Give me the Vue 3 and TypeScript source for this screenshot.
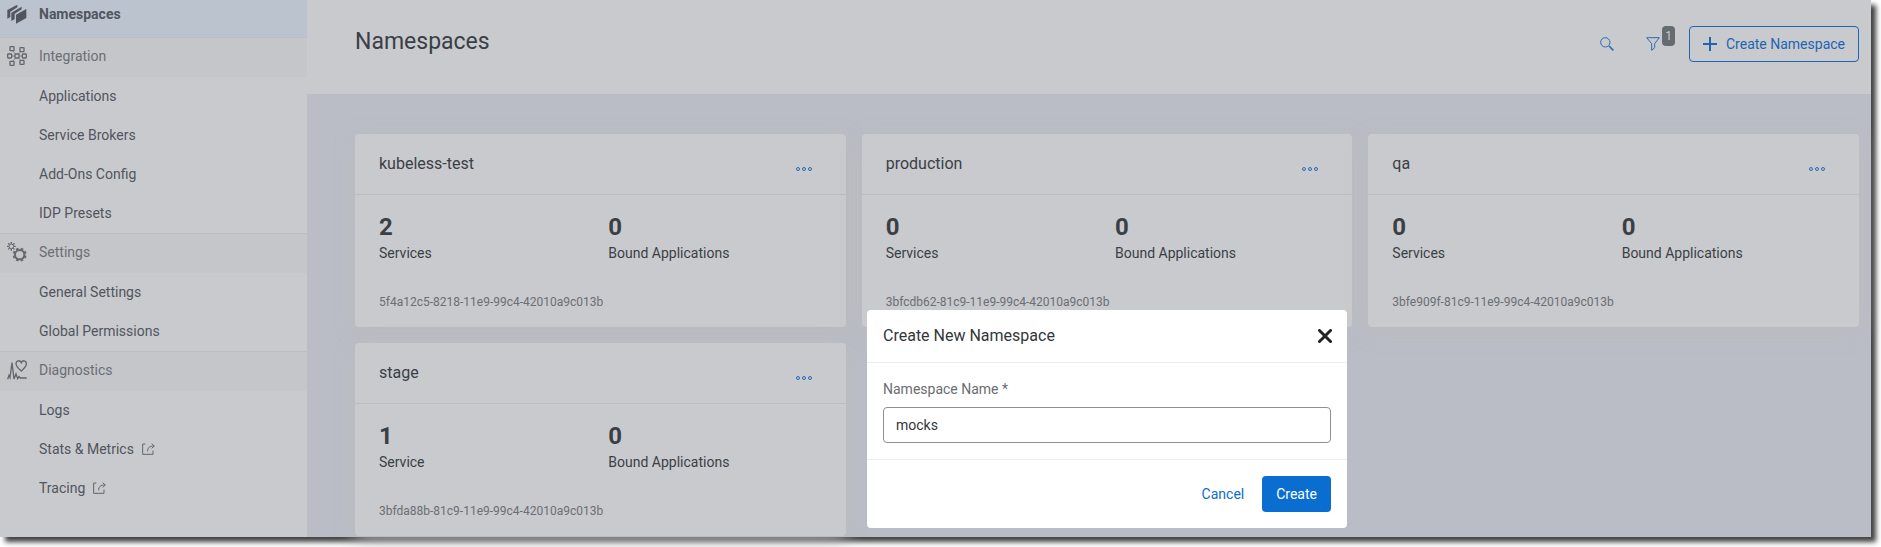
<script setup lang="ts">
import { ref } from 'vue'

interface NavItem {
  label: string
  external?: boolean
}

interface NavGroup {
  title: string
  icon: 'integration' | 'settings' | 'diagnostics'
  items: NavItem[]
}

interface Namespace {
  name: string
  services: number
  applications: number
  uid: string
}

const groups: NavGroup[] = [
  {
    title: 'Integration',
    icon: 'integration',
    items: [
      { label: 'Applications' },
      { label: 'Service Brokers' },
      { label: 'Add-Ons Config' },
      { label: 'IDP Presets' },
    ],
  },
  {
    title: 'Settings',
    icon: 'settings',
    items: [{ label: 'General Settings' }, { label: 'Global Permissions' }],
  },
  {
    title: 'Diagnostics',
    icon: 'diagnostics',
    items: [
      { label: 'Logs' },
      { label: 'Stats & Metrics', external: true },
      { label: 'Tracing', external: true },
    ],
  },
]

const namespaces: Namespace[] = [
  { name: 'kubeless-test', services: 2, applications: 0, uid: '5f4a12c5-8218-11e9-99c4-42010a9c013b' },
  { name: 'production', services: 0, applications: 0, uid: '3bfcdb62-81c9-11e9-99c4-42010a9c013b' },
  { name: 'qa', services: 0, applications: 0, uid: '3bfe909f-81c9-11e9-99c4-42010a9c013b' },
  { name: 'stage', services: 1, applications: 0, uid: '3bfda88b-81c9-11e9-99c4-42010a9c013b' },
]

const newName = ref('mocks')
</script>

<template>
  <div class="shell">
    <nav class="sidebar">
      <a class="current" href="#">
        <svg class="nav-icon" viewBox="0 0 60 60" aria-hidden="true">
          <path d="M1 18 31 2V10L10 23V39L1 44z" />
          <path d="M13 26 44 8V16L23 29V45L13 51z" />
          <path d="M27 32 58 15V42L27 59z" />
        </svg>
        <span>Namespaces</span>
      </a>
      <section v-for="group in groups" :key="group.title" class="group">
        <h2 class="group-title">
          <svg v-if="group.icon === 'integration'" class="nav-icon outline" viewBox="0 0 60 60" aria-hidden="true">
            <rect x="9" y="2" width="12" height="12" rx="2" />
            <rect x="39" y="5" width="12" height="12" rx="2" />
            <rect x="2" y="24" width="12" height="12" rx="2" />
            <rect x="24" y="24" width="12" height="12" rx="2" />
            <rect x="46" y="24" width="12" height="12" rx="2" />
            <rect x="9" y="46" width="12" height="12" rx="2" />
            <rect x="39" y="43" width="12" height="12" rx="2" />
            <path class="thin" d="M18 15l8 9M41 17l-7 7M14 30h10M36 30h10M26 36l-8 10M34 36l7 7" />
          </svg>
          <svg v-else-if="group.icon === 'settings'" class="nav-icon outline" viewBox="0 0 60 60" aria-hidden="true">
            <circle class="ring" cx="38" cy="38" r="14" />
            <path
              class="teeth"
              d="M44.100 23.200 46 18.700M52.800 31.900 57.300 30M52.800 44.100 57.300 46M44.100 52.800 46 57.300M31.900 52.800 30 57.300M23.200 44.100 18.700 46M23.200 31.900 18.700 30M31.900 23.200 30 18.700"
            />
            <circle class="small" cx="13" cy="13" r="7" />
            <path
              class="small-teeth"
              d="M13 5V0M18.700 7.300 22.200 3.800M21 13H26M18.700 18.700 22.200 22.200M13 21V26M7.300 18.700 3.800 22.200M5 13H0M7.300 7.300 3.800 3.800"
            />
          </svg>
          <svg v-else class="nav-icon outline" viewBox="0 0 60 60" aria-hidden="true">
            <path d="M2 58 6 46 9 53 15 8 21 57 27 42 32 56 36 50 40 54H59" />
            <path d="M43 33C35 26 27 19 27 11c0-10 12-12 16-3 4-9 15-7 15 3 0 8-7 15-15 22z" />
          </svg>
          <span>{{ group.title }}</span>
        </h2>
        <a v-for="item in group.items" :key="item.label" class="item" href="#">
          <span>{{ item.label }}</span>
          <svg v-if="item.external" class="external" viewBox="0 0 39 36" aria-hidden="true">
            <path d="M10 3H2v31h31V23M17 25C17 13 23 9 36 9M29 2l8 7-8 7" />
          </svg>
        </a>
      </section>
    </nav>

    <main class="content">
      <header class="page-header">
        <h1>Namespaces</h1>
        <div class="tools">
          <button class="tool" type="button" aria-label="Search">
            <svg class="tool-icon" viewBox="0 0 42 42" aria-hidden="true">
              <circle cx="16" cy="16" r="14" />
              <path class="handle" d="M27 27 40 40" />
            </svg>
          </button>
          <button class="tool filter" type="button" aria-label="Filter">
            <svg class="tool-icon" viewBox="0 0 42 42" aria-hidden="true">
              <path d="M2 2H40L26 20V32L17 40V20z" />
            </svg>
            <span class="badge">1</span>
          </button>
          <button class="create-namespace" type="button">
            <svg class="plus" viewBox="0 0 14 14" aria-hidden="true">
              <path d="M7 0V14M0 7H14" />
            </svg>
            <span>Create Namespace</span>
          </button>
        </div>
      </header>

      <div class="cards">
        <article v-for="ns in namespaces" :key="ns.name" class="card">
          <div class="card-header">
            <h3>{{ ns.name }}</h3>
            <button class="more" type="button" :aria-label="`Actions for ${ns.name}`">
              <svg viewBox="0 0 16 4" aria-hidden="true">
                <circle cx="2" cy="2" r="1.500" />
                <circle cx="8" cy="2" r="1.500" />
                <circle cx="14" cy="2" r="1.500" />
              </svg>
            </button>
          </div>
          <div class="card-body">
            <div class="stats">
              <div class="stat">
                <strong>{{ ns.services }}</strong>
                <span>{{ ns.services === 1 ? 'Service' : 'Services' }}</span>
              </div>
              <div class="stat">
                <strong>{{ ns.applications }}</strong>
                <span>Bound Applications</span>
              </div>
            </div>
            <p class="uid">{{ ns.uid }}</p>
          </div>
        </article>
      </div>

      <div class="modal-layer">
        <form class="modal" role="dialog" aria-labelledby="modal-title" @submit.prevent>
          <div class="modal-header">
            <h2 id="modal-title">Create New Namespace</h2>
            <button class="close" type="button" aria-label="Close">
              <svg viewBox="0 0 14 14" aria-hidden="true">
                <path d="M1.500 1.500 12.500 12.500M12.500 1.500 1.500 12.500" />
              </svg>
            </button>
          </div>
          <div class="modal-body">
            <label for="namespace-name">Namespace Name *</label>
            <input id="namespace-name" v-model="newName" type="text" />
          </div>
          <div class="modal-footer">
            <button class="cancel" type="button">Cancel</button>
            <button class="submit" type="submit">Create</button>
          </div>
        </form>
      </div>
    </main>
  </div>
</template>

<style>
body {
  margin: 0;
  overflow: hidden;
  background: #fff;
}
</style>

<style scoped>
.shell {
  display: flex;
  min-height: calc(100vh - 10px);
  margin: 0 10px 10px 0;
  background: #babdc6;
  box-shadow: 5px 5px 5px rgba(0, 0, 0, 0.75);
  color: #3a3f46;
  font-family: Roboto, "Liberation Sans", sans-serif;
  font-size: 14px;
  line-height: 20px;
}

h1,
h2,
h3,
p {
  margin: 0;
  font-weight: 400;
}

button,
input {
  font: inherit;
}

button {
  padding: 0;
  border: 0;
  background: none;
  color: #2065b4;
}

svg {
  display: block;
  flex: none;
}

.sidebar {
  flex: none;
  width: 307px;
  background: #c9cacd;
}

.sidebar a {
  color: #51555e;
  text-decoration: none;
}

.current,
.group-title {
  display: flex;
  align-items: center;
  gap: 12px;
  box-sizing: border-box;
  padding-left: 7px;
}

.current {
  height: 37px;
  padding-bottom: 9px;
  background: #bac3ce;
  font-weight: 700;
}

.group-title {
  height: 40px;
  padding-bottom: 4px;
  border-top: 1px solid #bbbdc2;
  background: #c5c6c9;
  color: #6b6e74;
  font-size: 14px;
}

.nav-icon {
  width: 20px;
  height: 20px;
  fill: #51555e;
}

.outline {
  fill: none;
  stroke: #62666e;
  stroke-width: 4;
}

.thin {
  stroke-width: 2;
}

.ring {
  stroke-width: 6;
}

.teeth {
  stroke-width: 8;
}

.small {
  stroke-width: 3;
}

.small-teeth {
  stroke-width: 4;
}

.item {
  display: flex;
  align-items: center;
  gap: 8px;
  box-sizing: border-box;
  height: 39px;
  padding: 0 0 2px 39px;
}

.external {
  width: 13px;
  height: 12px;
  fill: none;
  stroke: #62666e;
  stroke-width: 3;
}

.content {
  position: relative;
  flex: 1;
  min-width: 0;
}

.page-header {
  display: flex;
  align-items: flex-start;
  justify-content: space-between;
  box-sizing: border-box;
  height: 94px;
  padding: 26px 12px 0 48px;
  background: #c9cacd;
}

h1 {
  font-size: 23px;
  line-height: 32px;
}

.tools {
  display: flex;
  align-items: center;
}

.tool {
  position: relative;
  width: 46px;
  height: 36px;
  padding-left: 16px;
}

.filter {
  width: 59px;
}

.tool-icon {
  width: 14px;
  height: 14px;
  fill: none;
  stroke: #2b6bb3;
  stroke-width: 3;
}

.handle {
  stroke-width: 5;
}

.badge {
  position: absolute;
  top: 0;
  left: 32px;
  width: 13px;
  border-radius: 4px;
  background: #656c71;
  color: #c9cacd;
  font-size: 12px;
  line-height: 20px;
}

.create-namespace {
  display: flex;
  align-items: center;
  gap: 9px;
  height: 36px;
  padding: 0 13px;
  border: 1px solid #2065b4;
  border-radius: 4px;
}

.plus {
  width: 14px;
  height: 14px;
  stroke: #2065b4;
  stroke-width: 2;
}

.cards {
  display: grid;
  grid-template-columns: repeat(3, 1fr);
  gap: 16px;
  padding: 40px 12px 1px 48px;
}

.card {
  border-radius: 4px;
  background: #c9cacd;
  box-shadow: 0 5px 20px rgba(187, 188, 190, 0.8);
}

.card-header {
  display: flex;
  align-items: center;
  justify-content: space-between;
  height: 60px;
  padding: 0 34px 0 24px;
  border-bottom: 1px solid #bbbdc1;
}

h3 {
  font-size: 16px;
}

.more {
  padding-top: 10px;
}

.more svg {
  width: 16px;
  height: 4px;
  fill: none;
  stroke: #2b6bb3;
}

.card-body {
  padding: 18px 24px 15px;
}

.stats {
  display: grid;
  grid-template-columns: 1fr 1fr;
  gap: 16px;
}

.stat strong,
.stat span {
  display: block;
}

.stat strong {
  margin-bottom: 2px;
  font-size: 24px;
  line-height: 28px;
}

.uid {
  margin-top: 29px;
  color: #6b6e74;
  font-size: 12px;
}

.modal-layer {
  position: absolute;
  top: 310px;
  right: 0;
  left: 0;
  display: flex;
  justify-content: center;
  padding-left: 36px;
}

.modal {
  width: 480px;
  border-radius: 4px;
  background: #fff;
  color: #32363a;
}

.modal-header {
  display: flex;
  align-items: center;
  justify-content: space-between;
  height: 52px;
  padding: 0 15px 0 16px;
  border-bottom: 1px solid #eeeeef;
}

.modal-header h2 {
  font-size: 16px;
}

.close svg {
  width: 14px;
  height: 14px;
  stroke: #222;
  stroke-width: 3;
  stroke-linecap: round;
}

.modal-body {
  padding: 16px 16px;
  border-bottom: 1px solid #eeeeef;
}

.modal-body label {
  display: block;
  margin-bottom: 8px;
  color: #6a6d70;
}

.modal-body input {
  display: block;
  box-sizing: border-box;
  width: 100%;
  height: 36px;
  padding: 0 12px;
  border: 1px solid #89919a;
  border-radius: 4px;
  background: #fff;
  color: #32363a;
  outline: none;
}

.modal-footer {
  display: flex;
  justify-content: flex-end;
  gap: 4px;
  padding: 16px;
}

.modal-footer button {
  height: 36px;
  padding: 0 14px;
  border-radius: 4px;
}

.modal-footer .cancel {
  color: #0a6ed1;
}

.modal-footer .submit {
  background: #0a6ed1;
  color: #fff;
}
</style>
